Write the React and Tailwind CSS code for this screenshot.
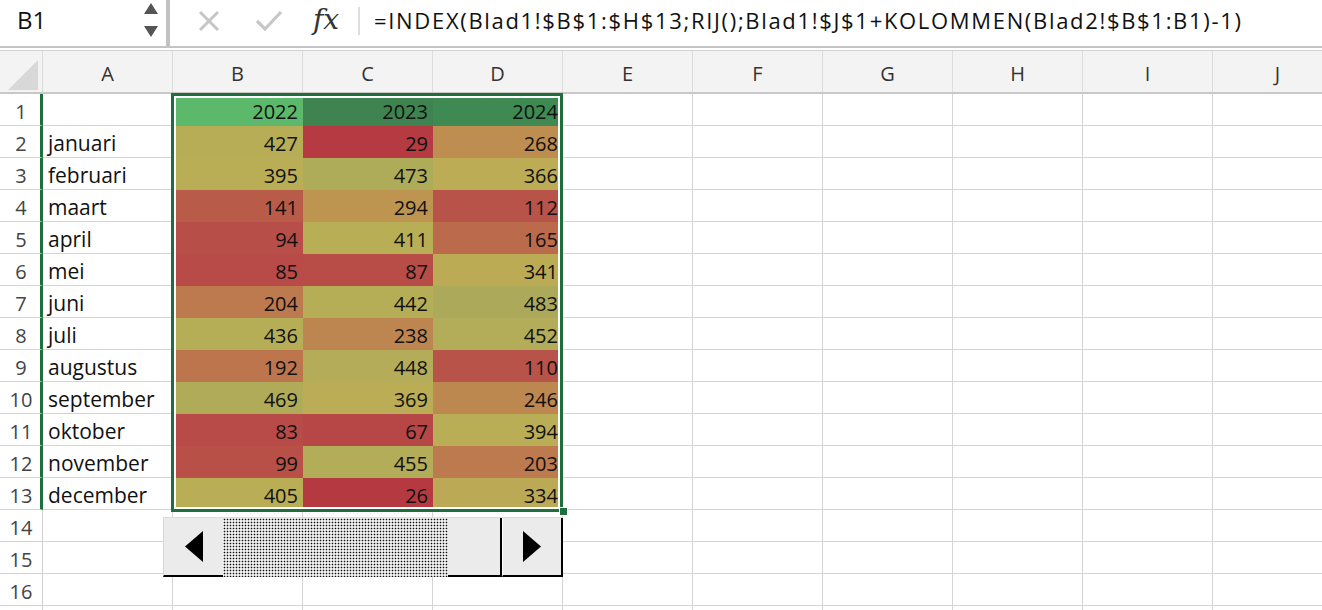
import React from "react";

const COLS = ["A", "B", "C", "D", "E", "F", "G", "H", "I", "J"];
const MONTHS = ["januari", "februari", "maart", "april", "mei", "juni", "juli", "augustus", "september", "oktober", "november", "december"];
const DATA = {
  B: [427, 395, 141, 94, 85, 204, 436, 192, 469, 83, 99, 405],
  C: [29, 473, 294, 411, 87, 442, 238, 448, 369, 67, 455, 26],
  D: [268, 366, 112, 165, 341, 483, 452, 110, 246, 394, 203, 334],
};
const YEARS = { B: ["2022", "#5cb96c"], C: ["2023", "#3f8450"], D: ["2024", "#3f8952"] };

const STOPS = [
  [26, [181, 57, 65]],
  [67, [183, 70, 70]],
  [90, [184, 77, 71]],
  [111, [184, 83, 74]],
  [141, [185, 91, 73]],
  [165, [187, 106, 76]],
  [198, [189, 120, 78]],
  [242, [189, 134, 80]],
  [268, [190, 142, 80]],
  [294, [189, 149, 81]],
  [338, [188, 171, 85]],
  [400, [185, 174, 85]],
  [440, [182, 173, 87]],
  [483, [172, 170, 90]],
];

function heat(v) {
  for (let i = 0; i < STOPS.length - 1; i++) {
    const [a, ca] = STOPS[i];
    const [b, cb] = STOPS[i + 1];
    if (v <= b) {
      const t = Math.max(0, (v - a) / (b - a));
      const c = ca.map((x, k) => Math.round(x + (cb[k] - x) * t));
      return `rgb(${c[0]},${c[1]},${c[2]})`;
    }
  }
  const c = STOPS[STOPS.length - 1][1];
  return `rgb(${c[0]},${c[1]},${c[2]})`;
}

function FormulaBar() {
  return (
    <div className="flex h-[48px] items-center border-b-2 border-[#c4c4c4] bg-white">
      <div className="relative flex h-full w-[166px] items-center pl-[17px] pb-[6px] text-[24px] text-[#111]">
        B1
        <svg className="absolute left-[143px] top-[2px]" width="16" height="36" viewBox="0 0 16 36">
          <polygon points="8,1 15,12 1,12" fill="#555" />
          <polygon points="1,24 15,24 8,35" fill="#555" />
        </svg>
      </div>
      <div className="h-full w-[4px] bg-[#c2c2c2]" />
      <svg className="ml-[28px] mb-[4px]" width="22" height="22" viewBox="0 0 22 22">
        <path d="M2 2 L20 20 M20 2 L2 20" stroke="#c6c6c6" strokeWidth="3" fill="none" />
      </svg>
      <svg className="ml-[35px] mb-[4px]" width="28" height="22" viewBox="0 0 28 22">
        <path d="M2 11 L10 19 L26 2" stroke="#c6c6c6" strokeWidth="3.2" fill="none" />
      </svg>
      <div className="ml-[30px] mb-[6px] w-[32px] font-['DejaVu_Serif',serif] text-[28px] italic leading-none text-[#333]">
        fx
      </div>
      <div className="ml-[13px] mb-[4px] h-[28px] w-[2px] bg-[#dedede]" />
      <div className="ml-[14px] pb-[5px] text-[22px] tracking-[1.68px] text-[#111] whitespace-nowrap">
        =INDEX(Blad1!$B$1:$H$13;RIJ();Blad1!$J$1+KOLOMMEN(Blad2!$B$1:B1)-1)
      </div>
    </div>
  );
}

function HeaderRow() {
  return (
    <div className="flex h-[44px] border-t border-b-2 border-t-[#d2d2d2] border-b-[#c8c8c8] bg-[#f3f3f3]">
      <div className="relative h-full w-[43px] shrink-0 border-r border-[#dadada]">
        <svg className="absolute left-[8px] top-[9px]" width="31" height="31" viewBox="0 0 31 31">
          <polygon points="0,30 30,30 30,0" fill="#d8d8d8" />
        </svg>
      </div>
      {COLS.map((c) => (
        <div
          key={c}
          className="flex h-full w-[130px] shrink-0 items-center justify-center border-r border-[#dcdcdc] pt-[4px] text-[20px] text-[#333]"
        >
          {c}
        </div>
      ))}
    </div>
  );
}

function Row({ n }) {
  const selected = n >= 1 && n <= 13;
  return (
    <div className="flex h-[32px]">
      <div
        className={
          selected
            ? "flex h-full w-[43px] shrink-0 items-center justify-center border-b border-r-[3px] border-b-[#d4d4d4] border-r-[#1f6e3d] pl-[2px] pt-[5px] text-[20px] text-[#444]"
            : "flex h-full w-[43px] shrink-0 items-center justify-center border-b border-r border-[#d0d0d0] pt-[5px] text-[20px] text-[#444]"
        }
      >
        {n <= 16 ? n : ""}
      </div>
      {COLS.map((c) => {
        let content = null;
        let bg = null;
        if (c === "A" && n >= 2 && n <= 13) {
          content = <span className="pl-[5px] text-[21px]">{MONTHS[n - 2]}</span>;
        }
        if (DATA[c] && n === 1) {
          content = <span className="ml-auto pr-[4px]">{YEARS[c][0]}</span>;
          bg = YEARS[c][1];
        } else if (DATA[c] && n >= 2 && n <= 13) {
          const v = DATA[c][n - 2];
          content = <span className="ml-auto pr-[4px]">{v}</span>;
          bg = heat(v);
        }
        return (
          <div
            key={c}
            className="flex h-full w-[130px] shrink-0 items-center border-b border-r border-[#d4d4d4] pt-[5px] text-[20px] text-[#111]"
            style={bg ? { backgroundColor: bg, borderColor: bg } : undefined}
          >
            {content}
          </div>
        );
      })}
    </div>
  );
}

function ScrollBar() {
  const dots = "bg-[radial-gradient(circle,#111_0.85px,transparent_1.05px)] bg-[length:3px_3px] bg-[#efefef]";
  return (
    <div className="absolute left-[163px] top-[517px] flex h-[60px] w-[400px] border-t border-[#dcdcdc]">
      <div className="flex h-full w-[60px] items-center justify-center border-b-2 border-l border-b-black border-l-[#d8d8d8] bg-[#ebebeb]">
        <svg width="18" height="31" viewBox="0 0 18 31">
          <polygon points="18,0 18,31 0,15.5" fill="#000" />
        </svg>
      </div>
      <div className={"h-full w-[225px] " + dots} />
      <div className="h-full w-[54px] border-b-2 border-r-2 border-black bg-[#ebebeb]" />
      <div className="flex h-full w-[61px] items-center justify-center border-b-2 border-r-2 border-l border-b-black border-r-black border-l-white bg-[#ebebeb]">
        <svg width="18" height="31" viewBox="0 0 18 31">
          <polygon points="0,0 0,31 18,15.5" fill="#000" />
        </svg>
      </div>
    </div>
  );
}

export default function App() {
  const rows = Array.from({ length: 17 }, (_, i) => i + 1);
  return (
    <div className="relative h-[610px] w-[1322px] overflow-hidden bg-white font-['Open_Sans',sans-serif]">
      <FormulaBar />
      <div className="h-[2px]" />
      <HeaderRow />
      <div className="flex flex-col">
        {rows.map((n) => (
          <Row key={n} n={n} />
        ))}
      </div>
      <div className="pointer-events-none absolute left-[171px] top-[93px] h-[419px] w-[392px] border-[3px] border-[#1f6e3d] shadow-[inset_0_0_0_2px_white]" />
      <div className="absolute left-[559px] top-[507px] h-[9px] w-[9px] border border-white bg-[#1f6e3d]" />
      <ScrollBar />
    </div>
  );
}
